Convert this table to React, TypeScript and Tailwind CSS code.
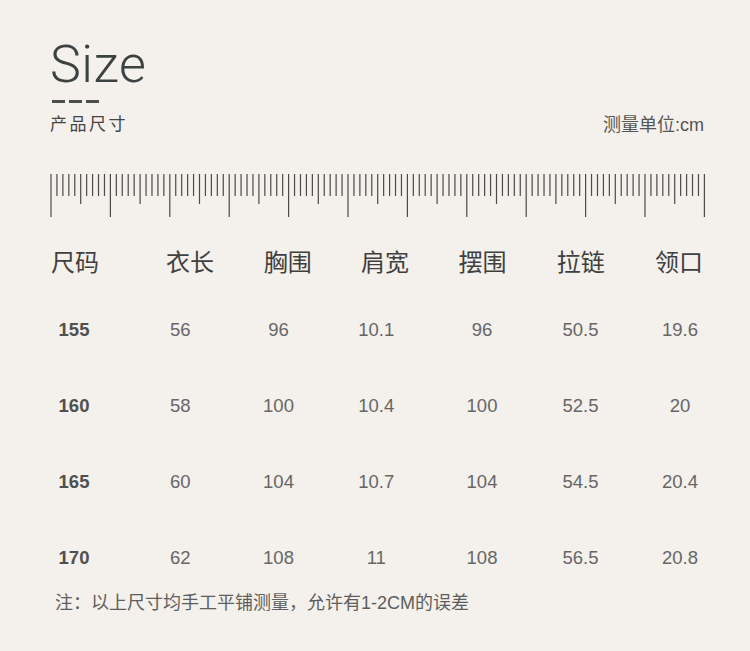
import React from "react";

const CJK = '"Liberation Sans", "Noto Sans CJK SC", sans-serif';

function Ruler() {
  const ticks = [];
  for (let i = 0; i <= 110; i++) {
    const x = 1 + i * 5.94;
    const y2 = i % 10 === 0 ? 43 : i % 5 === 0 ? 30 : 22;
    ticks.push(<line key={i} x1={x} x2={x} y1={0} y2={y2} stroke="#4a4a4a" strokeWidth={1.2} />);
  }
  return (
    <svg width={658} height={44} viewBox="0 0 658 44" className="block">
      {ticks}
    </svg>
  );
}

const headers = ["尺码", "衣长", "胸围", "肩宽", "摆围", "拉链", "领口"];
const rows = [
  ["155", "56", "96", "10.1", "96", "50.5", "19.6"],
  ["160", "58", "100", "10.4", "100", "52.5", "20"],
  ["165", "60", "104", "10.7", "104", "54.5", "20.4"],
  ["170", "62", "108", "11", "108", "56.5", "20.8"],
];
const cellPad = ["", "pl-[4px]", "", "pr-[4px]", "pl-[4px]", "", ""];

export default function App() {
  return (
    <div className="w-[750px] h-[651px] bg-[#f4f0eb] overflow-hidden" style={{ fontFamily: CJK }}>
      <div className="pl-[50px] pr-[46px] pt-[39px] flex flex-col">
        <div
          className="h-[52px] leading-[52px] text-[52px] font-light text-[#3c4241] tracking-[0.5px]"
          style={{ fontFamily: '"Roboto", "Liberation Sans", sans-serif' }}
        >
          Size
        </div>
        <div className="mt-[9px] flex gap-[4px] pl-[2px]">
          <div className="w-[13px] h-[3px] bg-[#4a4f4e]" />
          <div className="w-[13px] h-[3px] bg-[#4a4f4e]" />
          <div className="w-[13px] h-[3px] bg-[#4a4f4e]" />
        </div>
        <div className="mt-[10px] h-[24px] flex items-center justify-between">
          <span className="text-[17px] tracking-[2.5px] text-[#444]">产品尺寸</span>
          <span className="text-[18px] text-[#555]">测量单位:cm</span>
        </div>
        <div className="mt-[37px]">
          <Ruler />
        </div>
      </div>
      <div className="mt-[25px] pl-[51px] h-[40px] grid grid-cols-[90px_98px_97.5px_97px_98px_98.5px_98px] items-center text-[24px] text-[#404040]">
        {headers.map((h, i) => (
          <div key={h} className={i === 0 ? "text-left" : "text-center"}>
            {h}
          </div>
        ))}
      </div>
      <div className="mt-[27px] pl-[21px] flex flex-col gap-[36px]">
        {rows.map((r) => (
          <div key={r[0]} className="h-[40px] grid grid-cols-[106px_102.5px_98px_101.5px_102px_99px_100px] items-center text-[18.5px]">
            {r.map((v, i) => (
              <div
                key={i}
                className={`text-center ${cellPad[i]} ${i === 0 ? "font-bold text-[#505050]" : "text-[#666]"}`}
              >
                {v}
              </div>
            ))}
          </div>
        ))}
      </div>
      <div className="mt-[13px] pl-[55px] h-[24px] flex items-center text-[18px] text-[#5e5e5e]">
        注：以上尺寸均手工平铺测量，允许有1-2CM的误差
      </div>
    </div>
  );
}
